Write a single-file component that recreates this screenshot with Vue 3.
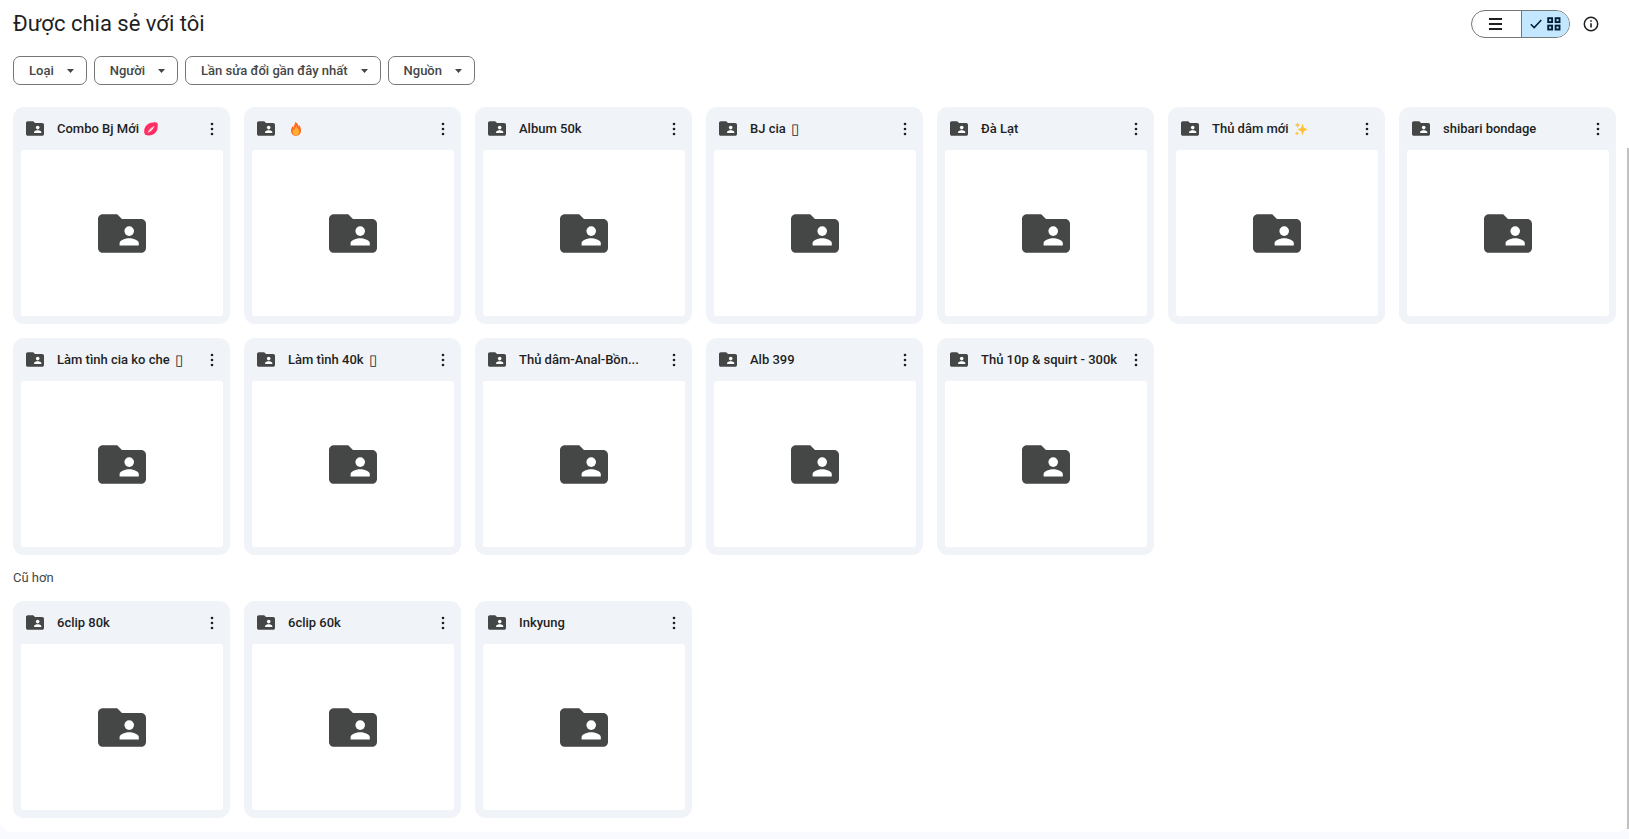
<script setup>
const filters = ['Loại', 'Người', 'Lần sửa đổi gần đây nhất', 'Nguồn']

const groups = [
  {
    id: 'recent',
    label: '',
    folders: [
      { name: 'Combo Bj Mới', mark: 'kiss' },
      { name: '', mark: 'fire' },
      { name: 'Album 50k' },
      { name: 'BJ cia', mark: 'box' },
      { name: 'Đà Lạt' },
      { name: 'Thủ dâm mới', mark: 'sparkles' },
      { name: 'shibari bondage' },
      { name: 'Làm tình cia ko che', mark: 'box' },
      { name: 'Làm tình 40k', mark: 'box' },
      { name: 'Thủ dâm-Anal-Bồn...' },
      { name: 'Alb 399' },
      { name: 'Thủ 10p & squirt - 300k' },
    ],
  },
  {
    id: 'older',
    label: 'Cũ hơn',
    folders: [{ name: '6clip 80k' }, { name: '6clip 60k' }, { name: 'Inkyung' }],
  },
]
</script>

<template>
  <div class="page">
    <svg class="defs" aria-hidden="true">
      <symbol id="shared-folder" viewBox="0 0 20 16">
        <path fill="#444746" d="M2 0h6l2 2h8c1.1 0 2 .9 2 2v10c0 1.1-.9 2-2 2H2c-1.100 0-2-.9-2-2V2C0 .9.9 0 2 0z" />
        <circle cx="13" cy="7" r="2" fill="#fff" />
        <path fill="#fff" d="M9 13v-1c0-1.330 2.670-2 4-2s4 .67 4 2v1z" />
      </symbol>
    </svg>

    <main class="panel">
      <header class="header">
        <h1>Được chia sẻ với tôi</h1>
        <div class="tools">
          <div class="toggle" role="group" aria-label="Bố cục">
            <button type="button" class="list" aria-label="Danh sách" aria-pressed="false">
              <svg width="13" height="12" viewBox="0 0 13 12"><path d="M0 1h13M0 6h13M0 11h13" stroke="#1f1f1f" stroke-width="2" /></svg>
            </button>
            <button type="button" class="on" aria-label="Lưới" aria-pressed="true">
              <svg width="12" height="10" viewBox="0 0 12 10"><path d="M.8 5.200 4.200 8.600 11.300 1" fill="none" stroke="#001d35" stroke-width="1.500" /></svg>
              <svg width="14" height="14" viewBox="0 0 14 14">
                <g fill="none" stroke="#001d35" stroke-width="1.900">
                  <rect x="1.200" y="1.200" width="3.900" height="3.900" /><rect x="8.600" y="1.200" width="3.900" height="3.900" />
                  <rect x="1.200" y="8.600" width="3.900" height="3.900" /><rect x="8.600" y="8.600" width="3.900" height="3.900" />
                </g>
              </svg>
            </button>
          </div>
          <button type="button" class="info" aria-label="Xem thông tin chi tiết">
            <svg width="16" height="16" viewBox="0 0 16 16">
              <circle cx="8" cy="8" r="6.700" fill="none" stroke="#1f1f1f" stroke-width="1.500" />
              <path d="M8 7.200v4.300M8 4.200v1.600" stroke="#1f1f1f" stroke-width="1.600" />
            </svg>
          </button>
        </div>
      </header>

      <div class="filters">
        <button v-for="f in filters" :key="f" type="button" aria-haspopup="menu">
          {{ f }}
          <svg width="7" height="4" viewBox="0 0 7 4"><path d="M0 0h7L3.500 4z" fill="#444746" /></svg>
        </button>
      </div>

      <section v-for="g in groups" :key="g.id">
        <h2 v-if="g.label">{{ g.label }}</h2>
        <div class="grid">
          <article v-for="(f, i) in g.folders" :key="i" class="card">
            <div class="bar">
              <svg class="small"><use href="#shared-folder" /></svg>
              <h3>
                <span v-if="f.name">{{ f.name }}</span>
                <span v-if="f.mark === 'box'" class="box">▯</span>
                <svg v-else-if="f.mark === 'kiss'" width="14" height="14" viewBox="0 0 14 14">
                  <path fill="#ff2d63" d="M1.200 12.800C-.4 10.500-.2 6.600 2.300 3.600 4.300 1.200 7 .2 9.500.4c1.300-.4 2.700-.3 3.500.4.800.9.900 2.300.6 3.500.300 2.800-.9 5.500-3.100 7.300C8.300 13.600 4.300 14.300 1.200 12.800z" />
                  <path fill="#fff" d="M3.500 10.800C4.200 8.400 6.800 5.300 10.500 3.700 9.200 7.300 6.900 9.700 3.500 10.800z" />
                  <path d="M4 10.200 9.700 4.300" stroke="#ff8ba8" stroke-width=".7" />
                </svg>
                <svg v-else-if="f.mark === 'fire'" class="fire" width="12" height="14" viewBox="0 0 12 14">
                  <path fill="#ff6d24" d="M5.200 0C8.300 1.500 8.400 3.300 8.600 4.500c.5-.4.6-.9.6-1.500C10.600 4.600 11 6.600 11 8.500c0 3.300-2.200 5.300-5 5.300s-5-2-5-5C1 6.500 2 5.200 2.600 4c.2.700.4 1.200.8 1.400C3.700 3.300 5.200 2.200 5.200 0z" />
                  <path fill="#ffb02e" d="M6.300 4.200c.2 1.800 2.900 2.800 2.900 5.400 0 2.200-1.400 3.700-3.200 3.700s-3.300-1.400-3.300-3.500c0-1.100.4-1.900.9-2.500.3.500.6.700 1 .8C4.600 6.500 5.500 5.500 6.300 4.200z" />
                </svg>
                <svg v-else-if="f.mark === 'sparkles'" width="14" height="14" viewBox="0 0 14 14">
                  <path fill="#fcc43a" d="M8.500 1.500 10 5.800 13.900 7.500 10 9.200 8.500 13.500 7 9.200 3.500 7.500 7 5.800zM3.500.2l.9 2.100 1.900.8-1.900.8-.9 2.100-.9-2.100-1.900-.8 1.900-.8zM3 9l.7 1.700 1.700.7-1.700.7L3 13.800l-.7-1.700-1.700-.7 1.700-.7z" />
                </svg>
              </h3>
              <button type="button" class="more" :aria-label="`Thao tác khác ${f.name}`">
                <svg width="4" height="14" viewBox="0 0 4 14"><g fill="#1f1f1f"><circle cx="2" cy="2" r="1.300" /><circle cx="2" cy="7" r="1.300" /><circle cx="2" cy="12" r="1.300" /></g></svg>
              </button>
            </div>
            <div class="preview"><svg class="large"><use href="#shared-folder" /></svg></div>
          </article>
        </div>
      </section>
    </main>
    <div class="thumb"></div>
  </div>
</template>

<style>
body { background: #f8fafd; }
</style>

<style scoped>
.page {
  position: relative;
  font-family: Roboto, "Noto Sans", sans-serif;
  color: #1f1f1f;
}
.defs { position: absolute; width: 0; height: 0; }
.panel {
  background: #fff;
  padding: 0 13px 14px;
  border-radius: 0 0 12px 12px;
}
button {
  font: inherit;
  color: inherit;
  background: none;
  border: 0;
  padding: 0;
  cursor: pointer;
}
svg { display: block; flex: none; }
.header {
  display: flex;
  align-items: center;
  justify-content: space-between;
  height: 48px;
}
h1 { margin: 0; font-size: 22px; line-height: 28px; font-weight: 400; }
.tools { display: flex; align-items: center; gap: 13px; padding-right: 17px; }
.toggle {
  display: flex;
  box-sizing: border-box;
  width: 99px;
  height: 28px;
  border: 1px solid #747775;
  border-radius: 14px;
  overflow: hidden;
}
.toggle button {
  flex: 1;
  display: flex;
  align-items: center;
  justify-content: center;
  gap: 5px;
}
.toggle .list { padding-right: 1px; }
.toggle .on { background: #c2e7ff; border-left: 1px solid #747775; }
.filters { display: flex; gap: 7px; margin: 8px 0 22px; }
.filters button {
  display: flex;
  align-items: center;
  gap: 13px;
  box-sizing: border-box;
  height: 29px;
  padding: 0 12px 0 15px;
  border: 1px solid #747775;
  border-radius: 7px;
  font-size: 13px;
  font-weight: 500;
  color: #444746;
}
.grid {
  display: grid;
  grid-template-columns: repeat(7, minmax(0, 1fr));
  gap: 14px;
}
h2 {
  margin: 0;
  font-size: 13px;
  line-height: 46px;
  font-weight: 400;
  color: #444746;
}
.card {
  display: flex;
  flex-direction: column;
  box-sizing: border-box;
  aspect-ratio: 1;
  padding: 0 7px 8px 8px;
  border-radius: 11px;
  background: #f0f4f9;
}
.bar { display: flex; align-items: center; height: 43px; padding: 0 1px 0 5px; }
.small { width: 18px; height: 15px; }
.large { width: 48px; height: 39px; }
h3 {
  flex: 1;
  display: flex;
  align-items: center;
  gap: 5px;
  min-width: 0;
  margin: 0 0 0 13px;
  font-size: 13px;
  line-height: 20px;
  font-weight: 500;
  white-space: nowrap;
}
.box { font-size: 15px; font-weight: 400; }
.fire { margin-left: 2px; }
.more { display: grid; place-items: center; width: 20px; height: 28px; }
.preview {
  flex: 1;
  display: grid;
  place-items: center;
  padding-top: 1px;
  background: #fff;
  border-radius: 3px;
}
.thumb {
  position: absolute;
  top: 148px;
  right: 0;
  bottom: 3px;
  width: 2px;
  background: #c1c1c1;
}
</style>
